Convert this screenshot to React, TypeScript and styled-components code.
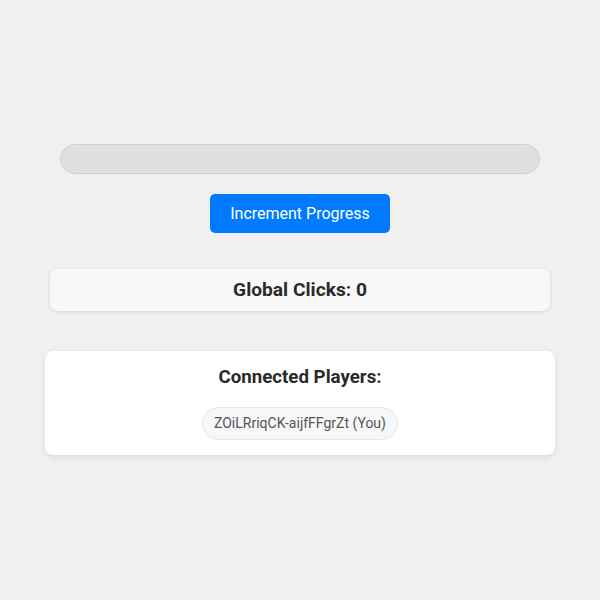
import React from "react";
import styled, { createGlobalStyle } from "styled-components";

const Global = createGlobalStyle`
  html, body { margin: 0; padding: 0; }
  body {
    background: #f0f0f0;
    font-family: Roboto, "Liberation Sans", Arial, sans-serif;
    color: #222;
  }
`;

const Page = styled.div`
  min-height: 600px;
  padding-bottom: 2px;
  display: flex;
  flex-direction: column;
  align-items: center;
  justify-content: center;
  box-sizing: border-box;
`;

const ProgressTrack = styled.div`
  width: 480px;
  height: 30px;
  box-sizing: border-box;
  background: #e0e0e0;
  border: 1px solid #cfcfcf;
  border-radius: 15px;
  overflow: hidden;
`;

const ProgressFill = styled.div`
  height: 100%;
  background: #4caf50;
`;

const Button = styled.button`
  margin-top: 20px;
  width: 180px;
  height: 39px;
  background: #007bff;
  color: #fff;
  border: none;
  border-radius: 5px;
  font-family: Roboto, "Liberation Sans", Arial, sans-serif;
  font-size: 16px;
  cursor: pointer;
`;

const ClicksBox = styled.div`
  margin-top: 36px;
  width: 500px;
  height: 42px;
  box-sizing: border-box;
  background: #f8f8f8;
  border-radius: 8px;
  box-shadow: 0 1px 4px rgba(0, 0, 0, 0.1);
  display: flex;
  align-items: center;
  justify-content: center;
  font-size: 19.2px;
  font-weight: 700;
  color: #2a2a2a;
`;

const PlayersCard = styled.div`
  margin-top: 40px;
  width: 510px;
  box-sizing: border-box;
  background: #fff;
  border-radius: 8px;
  box-shadow: 0 2px 6px rgba(0, 0, 0, 0.1);
  padding: 14px 20px 15px;
  display: flex;
  flex-direction: column;
  align-items: center;
`;

const CardTitle = styled.h3`
  margin: 0;
  font-size: 18.7px;
  line-height: 24px;
  font-weight: 700;
  color: #2a2a2a;
`;

const ChipList = styled.div`
  margin-top: 18px;
  display: flex;
  flex-wrap: wrap;
  justify-content: center;
  gap: 8px;
`;

const Chip = styled.span`
  display: inline-flex;
  align-items: center;
  height: 33px;
  box-sizing: border-box;
  padding: 0 11px;
  background: #f5f7f9;
  border: 1px solid #e3e6ea;
  border-radius: 17px;
  font-size: 14px;
  color: #555;
`;

export default function App() {
  const progress = 0;
  return (
    <>
      <Global />
      <Page>
        <ProgressTrack>
          <ProgressFill style={{ width: `${progress}%` }} />
        </ProgressTrack>
        <Button>Increment Progress</Button>
        <ClicksBox>Global Clicks: 0</ClicksBox>
        <PlayersCard>
          <CardTitle>Connected Players:</CardTitle>
          <ChipList>
            <Chip>ZOiLRriqCK-aijfFFgrZt (You)</Chip>
          </ChipList>
        </PlayersCard>
      </Page>
    </>
  );
}
